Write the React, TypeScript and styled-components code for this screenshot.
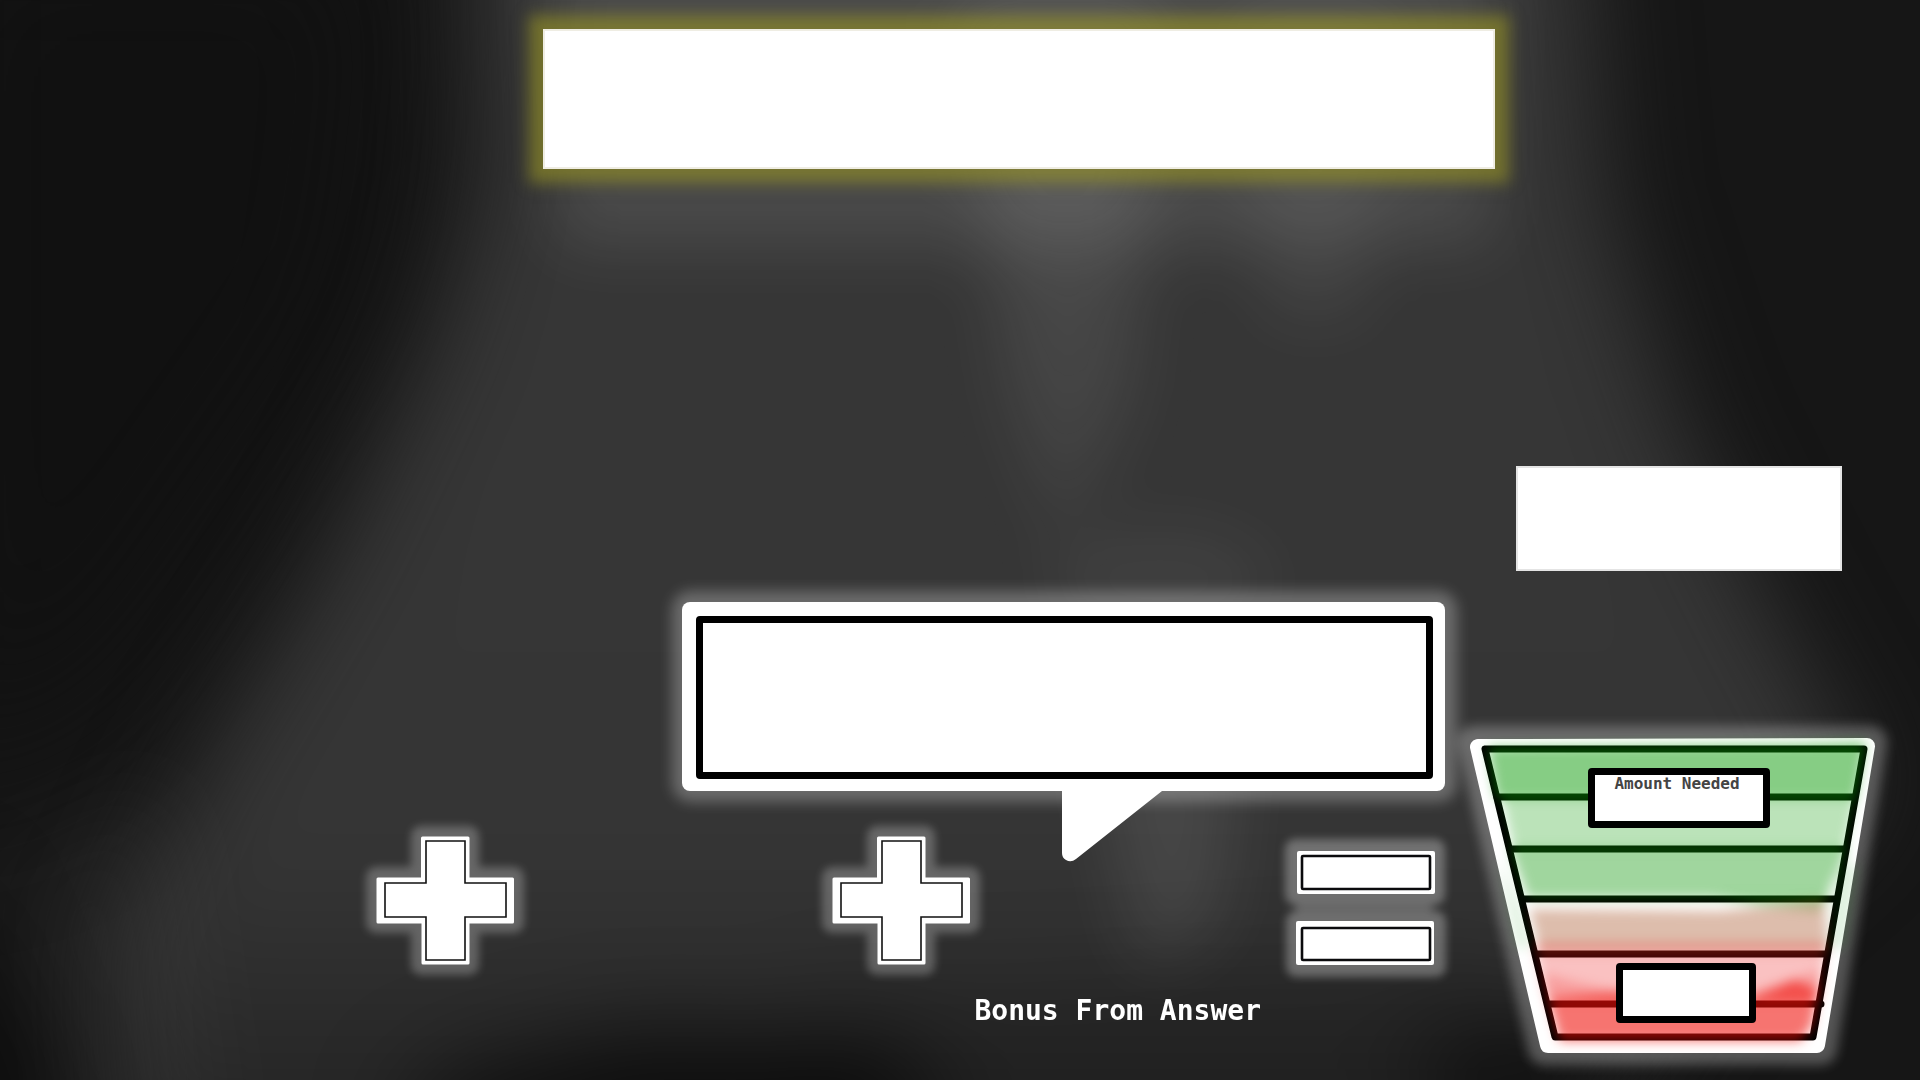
import React from 'react';
import styled, { createGlobalStyle } from 'styled-components';

const GlobalStyle = createGlobalStyle`
  *, *::before, *::after { box-sizing: border-box; }
  body { margin: 0; background: #1b1b1b; font-family: "DejaVu Sans Mono", monospace; }
`;

const Stage = styled.main`
  position: relative;
  isolation: isolate;
  display: flex;
  flex-direction: column;
  min-height: 100vh;
  padding: 29px 0 27px;
  overflow: hidden;
`;

const Backdrop = styled.svg`
  position: absolute;
  inset: 0;
  z-index: -1;
  width: 100%;
  height: 100%;
  color-interpolation-filters: sRGB;
`;

const Header = styled.header`
  display: flex;
  justify-content: center;
  padding-left: 118px;
`;

const Banner = styled.div`
  width: 952px;
  max-width: 100%;
  height: 140px;
  background: #fff;
  border: 2px solid #efede3;
  box-shadow: 0 0 14px 14px rgba(155, 151, 34, 0.57);
`;

const Board = styled.div`
  display: grid;
  grid-template-columns: 1fr 450px;
  align-items: end;
  margin-top: auto;
`;

const Play = styled.section`
  display: flex;
  flex-direction: column;
  align-items: flex-end;
  padding-right: 25px;
`;

const Bubble = styled.div`
  position: relative;
  width: 763px;
  height: 189px;
  padding: 14px 12px 12px 14px;
  background: #fff;
  border-radius: 8px;
  box-shadow: 1px 0 14px 11px rgba(255, 255, 255, 0.27);
`;

const BubbleFrame = styled.div`
  height: 100%;
  border: 7px solid #000;
  border-radius: 4px;
`;

const BubbleTail = styled.svg`
  position: absolute;
  top: 100%;
  left: 380px;
  width: 100px;
  height: 71px;
`;

const Equation = styled.div`
  display: grid;
  grid-template-columns: 456px 464px 139px;
  align-items: end;
  margin: 45px 10px 0 0;
`;

const Operator = styled.svg`
  display: block;
  overflow: visible;
  color-interpolation-filters: sRGB;
`;

const BonusLabel = styled.p`
  margin: 28px 184px 0 0;
  height: 60px;
  color: #fff;
  font-size: 28px;
  line-height: 36px;
  font-weight: 700;
  white-space: pre;
`;

const Side = styled.aside`
  display: flex;
  flex-direction: column;
  gap: 167px;
`;

const ScoreCard = styled.div`
  width: 326px;
  height: 105px;
  margin-left: 46px;
  background: #fff;
  border: 2px solid #e4e4e4;
`;

const Meter = styled.div`
  position: relative;
  width: 405px;
  height: 315px;
`;

const MeterArt = styled.svg`
  display: block;
  overflow: visible;
  color-interpolation-filters: sRGB;
`;

const MeterBox = styled.div<{ $top: number; $left: number; $width: number }>`
  position: absolute;
  top: ${p => p.$top}px;
  left: ${p => p.$left}px;
  width: ${p => p.$width}px;
  height: 60px;
  padding-right: 4px;
  background: #fff;
  border: 7px solid #000;
  border-radius: 4px;
  color: #444;
  font-size: 16px;
  line-height: 18px;
  font-weight: 700;
  text-align: center;
  white-space: nowrap;
`;

function Spotlights() {
  return (
    <Backdrop viewBox="0 0 1920 1080" preserveAspectRatio="none" aria-hidden="true">
      <defs>
        <linearGradient id="beam" x1="0" y1="0" x2="0" y2="1">
          <stop offset="0" stopColor="#383838" />
          <stop offset="0.25" stopColor="#363636" />
          <stop offset="0.75" stopColor="#353535" />
          <stop offset="0.9" stopColor="#282828" />
          <stop offset="1" stopColor="#222" />
        </linearGradient>
        <linearGradient id="shaft" x1="0" y1="0" x2="0" y2="1">
          <stop offset="0" stopColor="#fff" stopOpacity="0.1" />
          <stop offset="0.4" stopColor="#fff" stopOpacity="0.1" />
          <stop offset="1" stopColor="#fff" stopOpacity="0.05" />
        </linearGradient>
        <filter id="wide" x="-60%" y="-60%" width="220%" height="220%"><feGaussianBlur stdDeviation="80" /></filter>
        <filter id="soft" x="-30%" y="-60%" width="160%" height="220%"><feGaussianBlur stdDeviation="48" /></filter>
        <filter id="softer" x="-60%" y="-60%" width="220%" height="220%"><feGaussianBlur stdDeviation="32" /></filter>
      </defs>
      <rect width="1920" height="1080" fill="#161616" />
      <path d="M-100-100H420L380 300L100 700L-100 800Z" fill="#111" filter="url(#wide)" />
      <path d="M470-100H1580L1605 200L1680 430L1770 610L1870 790L1750 900L1560 1180H120L110 940L210 750L325 560L430 340L480 180Z" fill="url(#beam)" filter="url(#soft)" />
      <path d="M-20 880L160 780L220 1180H90Z" fill="#fff" opacity="0.04" filter="url(#soft)" />
      <g filter="url(#softer)">
        <path d="M540-60H1500L1490 245H560Z" fill="#fff" opacity="0.1" />
        <path d="M960 0H1160L1130 400L1060 550L1010 400Z" fill="url(#shaft)" />
        <path d="M1230 0H1400L1360 320H1270Z" fill="#fff" opacity="0.06" />
        <path d="M1090 740H1240L1220 930L1140 970Z" fill="#fff" opacity="0.09" />
        <ellipse cx="1160" cy="580" rx="110" ry="50" fill="#fff" opacity="0.05" />
      </g>
      <g filter="url(#soft)">
        <path d="M430 1085L640 1035L900 1050L960 1160H400Z" fill="#000" opacity="0.7" />
        <path d="M800 1000L1500 960L1550 1160H780Z" fill="#000" opacity="0.15" />
        <ellipse cx="1520" cy="1080" rx="100" ry="50" fill="#000" opacity="0.65" />
        <path d="M-60 860L50 1140H-60Z" fill="#000" opacity="0.6" />
      </g>
    </Backdrop>
  );
}

function Plus() {
  return (
    <Operator width="138" height="129" viewBox="0 0 138 129" role="img" aria-label="plus">
      <filter id="plusGlow" x="-30%" y="-30%" width="160%" height="160%"><feGaussianBlur stdDeviation="4" /></filter>
      <path d="M45 0H93V41H138V87H93V129H45V87H0V41H45Z" fill="#fff" stroke="#fff" strokeWidth="20" strokeLinejoin="round" opacity="0.25" filter="url(#plusGlow)" />
      <path d="M46.5 2H92V43H136.500V86H92V127H47V86H2V43H46.500Z" fill="#fff" stroke="#fff" strokeWidth="3" strokeLinejoin="round" />
      <path d="M50 5H89V47H130V81H89V124H50V81H9V47H50Z" fill="none" stroke="#111" strokeWidth="1.6" />
    </Operator>
  );
}

function Equals() {
  return (
    <Operator width="139" height="114" viewBox="0 0 139 114" role="img" aria-label="equals">
      <filter id="equalsGlow" x="-20%" y="-50%" width="140%" height="200%"><feGaussianBlur stdDeviation="4" /></filter>
      <g fill="#fff" opacity="0.3" filter="url(#equalsGlow)">
        <rect x="-11" y="-12" width="160" height="66" rx="10" />
        <rect x="-10" y="60" width="160" height="66" rx="10" />
        <rect x="0" y="50" width="136" height="14" opacity="0.8" />
      </g>
      <rect x="1" y="0" width="138" height="43" rx="2" fill="#fff" />
      <rect x="0" y="70" width="138" height="44" rx="2" fill="#fff" />
      <g fill="none" stroke="#0b0b0d" strokeWidth="2.6">
        <rect x="6" y="5" width="128" height="33" rx="1" />
        <rect x="6" y="77" width="128" height="32" rx="1" />
      </g>
    </Operator>
  );
}

function MeterDrawing() {
  return (
    <MeterArt width="405" height="315" viewBox="0 0 405 315" aria-hidden="true">
      <defs>
        <filter id="meterGlow" x="-20%" y="-20%" width="140%" height="140%"><feGaussianBlur stdDeviation="6" /></filter>
        <filter id="tint" x="-20%" y="-40%" width="140%" height="180%"><feGaussianBlur stdDeviation="6" /></filter>
      </defs>
      <path d="M4 4L401 4L351 311L74 311Z" fill="#fff" stroke="#fff" strokeWidth="32" strokeLinejoin="round" opacity="0.27" filter="url(#meterGlow)" />
      <path d="M8 9L397 8L347 307L78 307Z" fill="#fff" stroke="#fff" strokeWidth="16" strokeLinejoin="round" />
      <g fill="none" stroke="#000" strokeWidth="7" strokeLinejoin="round" strokeLinecap="round">
        <path d="M15 11H394L343 299H85Z" />
        <path d="M27 59H384M40 111H375M53 161H366M66 216H356M80 266H351" />
      </g>
      <g filter="url(#tint)">
        <path d="M18 9L330 6L396 4L386 60H26Z" fill="#089a05" opacity="0.49" />
        <path d="M32 59H386L374 112H44Z" fill="#0a9a05" opacity="0.28" />
        <path d="M40 110H378L364 140L356 160H58Z" fill="#0a9605" opacity="0.39" />
        <path d="M240 157H360L350 174L290 168Z" fill="#0a9605" opacity="0.24" />
        <path d="M60 171L250 173L354 162L358 214H70Z" fill="#a04818" opacity="0.36" />
        <path d="M64 205H356L350 260H76Z" fill="#ed1010" opacity="0.26" />
        <path d="M72 235L110 245L150 254L280 256L320 242L350 232L346 264H80Z" fill="#ef1008" opacity="0.2" />
        <path d="M78 260L150 254L280 260L325 242L348 252L342 288L330 303H90Z" fill="#ef1008" opacity="0.58" />
        <path d="M368 130L388 125L374 210H360Z" fill="#0a9605" opacity="0.14" />
        <path d="M28 120L50 170L60 210L48 210Z" fill="#0a9605" opacity="0.14" />
      </g>
    </MeterArt>
  );
}

export default function App() {
  return (
    <>
      <GlobalStyle />
      <Stage>
        <Spotlights />
        <Header>
          <Banner />
        </Header>
        <Board>
          <Play>
            <Bubble>
              <BubbleFrame />
              <BubbleTail viewBox="0 0 100 71" aria-hidden="true">
                <path d="M0 0H100L14 68Q9 72 4 69Q0 67 0 62Z" fill="#fff" />
              </BubbleTail>
            </Bubble>
            <Equation>
              <Plus />
              <Plus />
              <Equals />
            </Equation>
            <BonusLabel>Bonus From Answer</BonusLabel>
          </Play>
          <Side>
            <ScoreCard />
            <Meter>
              <MeterDrawing />
              <MeterBox $top={30} $left={118} $width={182}>Amount Needed</MeterBox>
              <MeterBox $top={225} $left={146} $width={140} />
            </Meter>
          </Side>
        </Board>
      </Stage>
    </>
  );
}
